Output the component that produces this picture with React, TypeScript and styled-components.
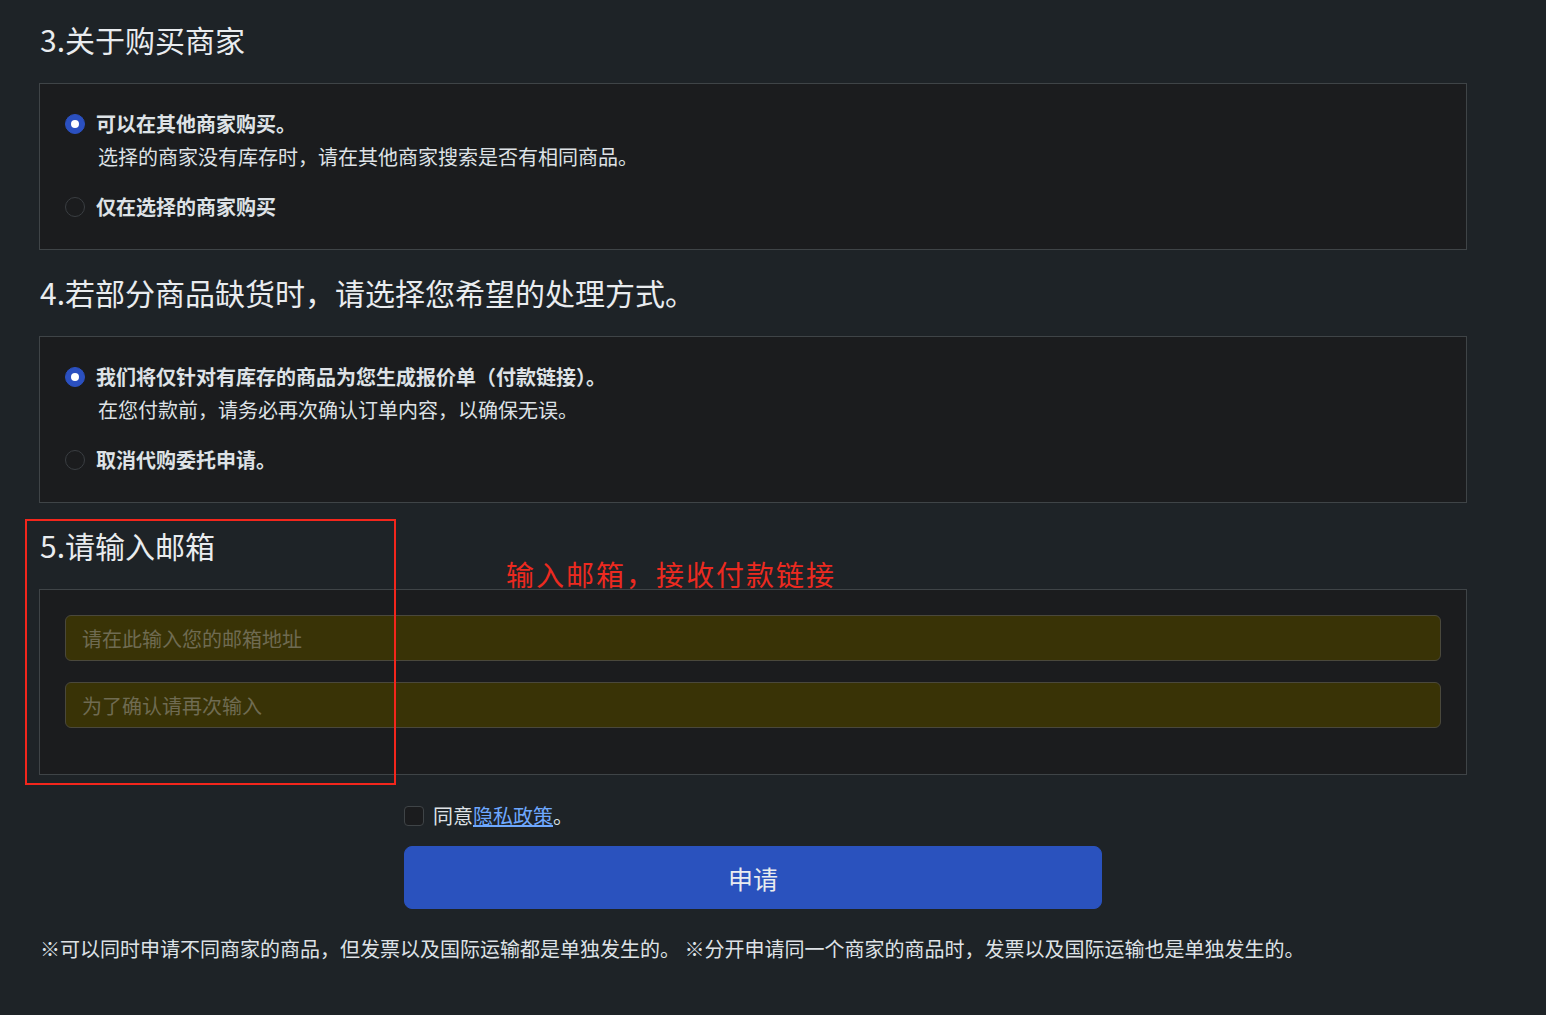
import React from "react";
import styled, { createGlobalStyle } from "styled-components";

const Global = createGlobalStyle`
  html, body { margin: 0; padding: 0; background: #1e2327; }
  body { font-family: "Noto Sans CJK SC", "Noto Sans", sans-serif; color: #dee2e6; }
  * { box-sizing: border-box; }
`;

const Page = styled.div`
  position: relative;
  padding: 21px 0 40px 39px;
  min-height: 1015px;
`;

const Content = styled.div`
  width: 1428px;
`;

const Heading = styled.h2<{ $first?: boolean }>`
  margin: ${(p) => (p.$first ? "0" : "24px")} 0 26px 1px;
  font-size: 30px;
  font-weight: 400;
  line-height: 36px;
  color: #e9ecef;
`;

const Panel = styled.div<{ $padBottom?: number }>`
  background: #1b1c1e;
  border: 1px solid #3f4447;
  padding: 25px 25px ${(p) => p.$padBottom ?? 27}px 25px;
`;

const Option = styled.div<{ $spaced?: boolean }>`
  margin-top: ${(p) => (p.$spaced ? "20px" : "0")};
`;

const OptionRow = styled.label`
  display: flex;
  align-items: center;
  gap: 11px;
  font-size: 20px;
  line-height: 30px;
  font-weight: 700;
  color: #dee2e6;
`;

const Radio = styled.span<{ $checked?: boolean }>`
  width: 20px;
  height: 20px;
  border-radius: 50%;
  flex: none;
  background: ${(p) => (p.$checked ? "#2b50c0" : "#1b1c1e")};
  border: 1px solid ${(p) => (p.$checked ? "#2b50c0" : "#3a3e42")};
  display: flex;
  align-items: center;
  justify-content: center;
  &::after {
    content: "";
    display: ${(p) => (p.$checked ? "block" : "none")};
    width: 8px;
    height: 8px;
    border-radius: 50%;
    background: #fff;
  }
`;

const SubText = styled.div`
  margin: 3px 0 0 33px;
  font-size: 20px;
  line-height: 30px;
  color: #dee2e6;
`;

const Input = styled.input`
  display: block;
  width: 100%;
  height: 46px;
  margin-bottom: 21px;
  padding: 0 16px;
  background: #393306;
  border: 1px solid #4a483c;
  border-radius: 6px;
  font-family: inherit;
  font-size: 20px;
  color: #dee2e6;
  outline: none;
  &::placeholder { color: #6f6b52; }
`;

const Actions = styled.div`
  width: 698px;
  margin: 26px auto 0;
`;

const AgreeRow = styled.label`
  display: flex;
  align-items: center;
  gap: 9px;
  font-size: 20px;
  line-height: 30px;
  color: #dee2e6;
`;

const Check = styled.span`
  width: 20px;
  height: 20px;
  border-radius: 4px;
  background: #1b1c1e;
  border: 1px solid #3f4447;
  flex: none;
`;

const Link = styled.a`
  color: #6ea8fe;
  text-decoration: underline;
`;

const Submit = styled.button`
  display: block;
  width: 100%;
  height: 63px;
  margin-top: 15px;
  background: #2a52be;
  border: 1px solid #2a52be;
  border-radius: 8px;
  color: #e9ecef;
  font-family: inherit;
  font-size: 25px;
  cursor: pointer;
`;

const Note = styled.p`
  margin: 25px 0 0 1px;
  font-size: 20px;
  line-height: 30px;
  color: #dee2e6;
`;

const RedFrame = styled.div`
  position: absolute;
  left: 25px;
  top: 519px;
  width: 371px;
  height: 266px;
  border: 2px solid #f3261c;
  pointer-events: none;
`;

const RedNote = styled.div`
  position: absolute;
  left: 506px;
  top: 555px;
  font-size: 28px;
  line-height: 38px;
  letter-spacing: 2px;
  color: #ec2a20;
  white-space: nowrap;
`;

export default function App() {
  return (
    <>
      <Global />
      <Page>
        <Content>
          <Heading $first>3.关于购买商家</Heading>
          <Panel>
            <Option>
              <OptionRow>
                <Radio $checked />
                可以在其他商家购买。
              </OptionRow>
              <SubText>选择的商家没有库存时，请在其他商家搜索是否有相同商品。</SubText>
            </Option>
            <Option $spaced>
              <OptionRow>
                <Radio />
                仅在选择的商家购买
              </OptionRow>
            </Option>
          </Panel>

          <Heading>4.若部分商品缺货时，请选择您希望的处理方式。</Heading>
          <Panel>
            <Option>
              <OptionRow>
                <Radio $checked />
                我们将仅针对有库存的商品为您生成报价单（付款链接）。
              </OptionRow>
              <SubText>在您付款前，请务必再次确认订单内容，以确保无误。</SubText>
            </Option>
            <Option $spaced>
              <OptionRow>
                <Radio />
                取消代购委托申请。
              </OptionRow>
            </Option>
          </Panel>

          <Heading>5.请输入邮箱</Heading>
          <Panel $padBottom={25}>
            <Input placeholder="请在此输入您的邮箱地址" />
            <Input placeholder="为了确认请再次输入" />
          </Panel>

          <Actions>
            <AgreeRow>
              <Check />
              <span>
                同意<Link href="#">隐私政策</Link>。
              </span>
            </AgreeRow>
            <Submit>申请</Submit>
          </Actions>

          <Note>
            ※可以同时申请不同商家的商品，但发票以及国际运输都是单独发生的。 ※分开申请同一个商家的商品时，发票以及国际运输也是单独发生的。
          </Note>
        </Content>
        <RedFrame />
        <RedNote>输入邮箱，接收付款链接</RedNote>
      </Page>
    </>
  );
}
